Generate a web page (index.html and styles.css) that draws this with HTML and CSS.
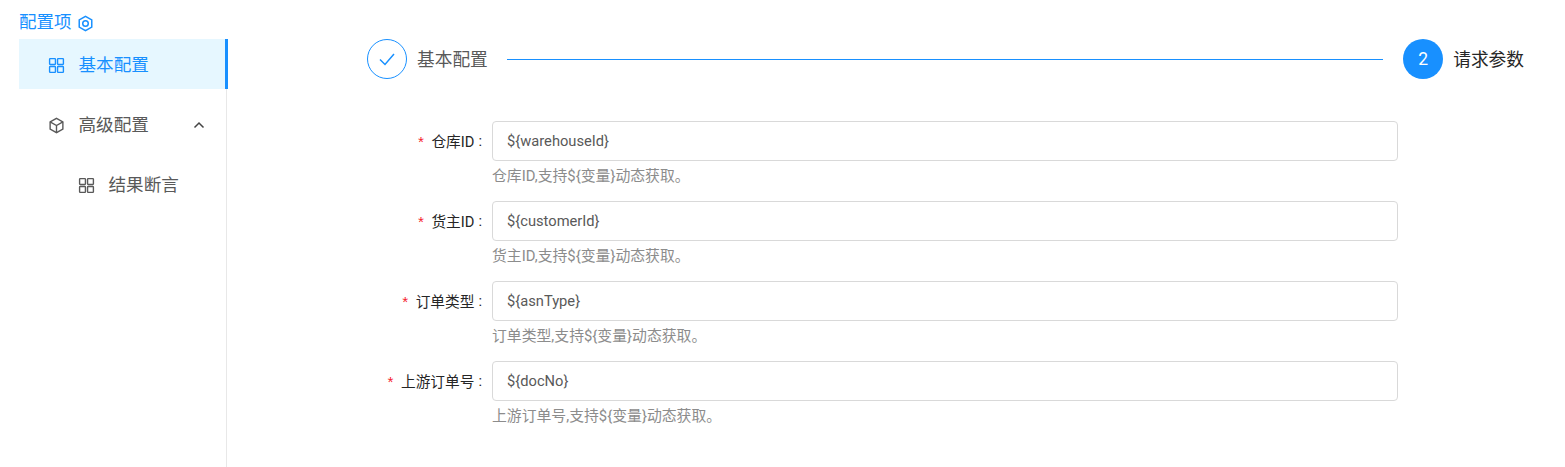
FILE: index.html
```html
<!DOCTYPE html>
<html lang="zh-CN">
<head>
<meta charset="utf-8">
<title>配置项</title>
<link rel="stylesheet" href="styles.css">
</head>
<body>
<div class="page">
  <aside class="side">
    <div class="side-title">配置项
      <svg class="hex" viewBox="0 0 16 16"><path d="M8 1.2 13.9 4.6V11.4L8 14.8 2.1 11.4V4.6Z"/><circle cx="8" cy="8" r="2.6"/></svg>
    </div>
    <nav class="menu">
      <div class="item active">
        <svg class="ic" viewBox="0 0 16 16"><rect x="1.5" y="1.5" width="5.5" height="5.5" rx=".6"/><rect x="9" y="1.5" width="5.5" height="5.5" rx=".6"/><rect x="1.5" y="9" width="5.5" height="5.5" rx=".6"/><rect x="9" y="9" width="5.5" height="5.5" rx=".6"/></svg>
        <span>基本配置</span>
      </div>
      <div class="item">
        <svg class="ic" viewBox="0 0 16 16"><path d="M8 1.3 14 4.6V11.4L8 14.7 2 11.4V4.6Z"/><path d="M2 4.6 8 8 14 4.6M8 8V14.7"/></svg>
        <span>高级配置</span>
        <svg class="chev" viewBox="0 0 12 12"><path d="M1.5 8.5 6 4 10.5 8.5"/></svg>
      </div>
      <div class="item sub">
        <svg class="ic" viewBox="0 0 16 16"><rect x="1.5" y="1.5" width="5.5" height="5.5" rx=".6"/><rect x="9" y="1.5" width="5.5" height="5.5" rx=".6"/><rect x="1.5" y="9" width="5.5" height="5.5" rx=".6"/><rect x="9" y="9" width="5.5" height="5.5" rx=".6"/></svg>
        <span>结果断言</span>
      </div>
    </nav>
  </aside>
  <main class="main">
    <div class="steps">
      <div class="circle done"><svg viewBox="0 0 18 18"><path d="M2 9.5 7 14.5 16 4"/></svg></div>
      <span class="step-label">基本配置</span>
      <div class="line"></div>
      <div class="circle cur">2</div>
      <span class="step-label now">请求参数</span>
    </div>
    <form class="form">
      <div class="row">
        <label class="lab"><i>*</i>仓库ID<b>:</b></label>
        <div class="field"><input class="inp" value="${warehouseId}"><p class="hint">仓库ID,支持${变量}动态获取。</p></div>
      </div>
      <div class="row">
        <label class="lab"><i>*</i>货主ID<b>:</b></label>
        <div class="field"><input class="inp" value="${customerId}"><p class="hint">货主ID,支持${变量}动态获取。</p></div>
      </div>
      <div class="row">
        <label class="lab"><i>*</i>订单类型<b>:</b></label>
        <div class="field"><input class="inp" value="${asnType}"><p class="hint">订单类型,支持${变量}动态获取。</p></div>
      </div>
      <div class="row">
        <label class="lab"><i>*</i>上游订单号<b>:</b></label>
        <div class="field"><input class="inp" value="${docNo}"><p class="hint">上游订单号,支持${变量}动态获取。</p></div>
      </div>
    </form>
  </main>
</div>
</body>
</html>
```
FILE: styles.css
```css
* { box-sizing: border-box; }
html, body { margin: 0; height: 100%; background: #fff; overflow: hidden; }
body { font-family: Roboto, "Noto Sans CJK SC", sans-serif; color: #333; }
.page { display: flex; height: 467px; padding-left: 19px; }
.side { width: 208px; flex: none; padding-top: 10px; }
.side-title { height: 24px; display: flex; align-items: center; gap: 5px; font-size: 17.5px; line-height: 24px; color: #1890ff; white-space: nowrap; }
.hex { width: 17px; height: 17px; fill: none; stroke: #1890ff; stroke-width: 1.4; margin-top: 2px; }
.menu { height: 428px; border-right: 1px solid #e8e8e8; margin-top: 5px; }
.item { height: 50px; margin-bottom: 10px; display: flex; align-items: center; padding-left: 29px; font-size: 17.6px; color: #595959; margin-right: -2px; }
.item span { margin: 0 0 2px 13.5px; }
.item.sub { padding-left: 59px; }
.item.active { background: #e6f7ff; color: #1890ff; border-right: 3px solid #1890ff; }
.ic { width: 17px; height: 17px; fill: none; stroke: currentColor; stroke-width: 1.3; margin-top: 2px; }
.chev { width: 12px; height: 12px; fill: none; stroke: #444; stroke-width: 1.5; margin: 2px 0 0 44.5px; }
.main { flex: 1; padding: 39px 0 0 140px; }
.steps { display: flex; align-items: center; height: 40px; width: 1157px; }
.circle { width: 40px; height: 40px; border-radius: 50%; flex: none; display: flex; align-items: center; justify-content: center; font-size: 17.5px; }
.circle.done { border: 1px solid #1890ff; }
.circle.done svg { width: 18px; height: 18px; fill: none; stroke: #1890ff; stroke-width: 1.5; }
.circle.cur { background: #1890ff; color: #fff; }
.step-label { font-size: 17.7px; color: #595959; margin: 0 0 2px 10px; white-space: nowrap; }
.step-label.now { color: #262626; }
.line { flex: 1; height: 1px; background: #1890ff; margin: 0 20px 0 19px; }
.form { margin-top: 42px; display: flex; flex-direction: column; }
.row { display: flex; height: 80px; }
.lab { width: 125px; flex: none; height: 40px; display: flex; align-items: center; justify-content: flex-end; font-size: 14.7px; color: #262626; white-space: nowrap; padding: 0 9px 1px 0; }
.lab b { font-weight: 400; margin: 0 1px 0 4px; }
.lab i { font-style: normal; color: #f5222d; margin-right: 6px; padding-top: 7px; font-family: "Liberation Mono", monospace; font-size: 15px; }
.field { width: 906px; }
.inp { display: block; width: 100%; height: 40px; border: 1px solid #d9d9d9; border-radius: 4px; padding: 0 14px; font: 14.7px Roboto, "Noto Sans CJK SC", sans-serif; color: #595959; outline: none; }
.hint { margin: 4px 0 0; font-size: 14.85px; line-height: 22px; color: #8c8c8c; white-space: nowrap; }
```
